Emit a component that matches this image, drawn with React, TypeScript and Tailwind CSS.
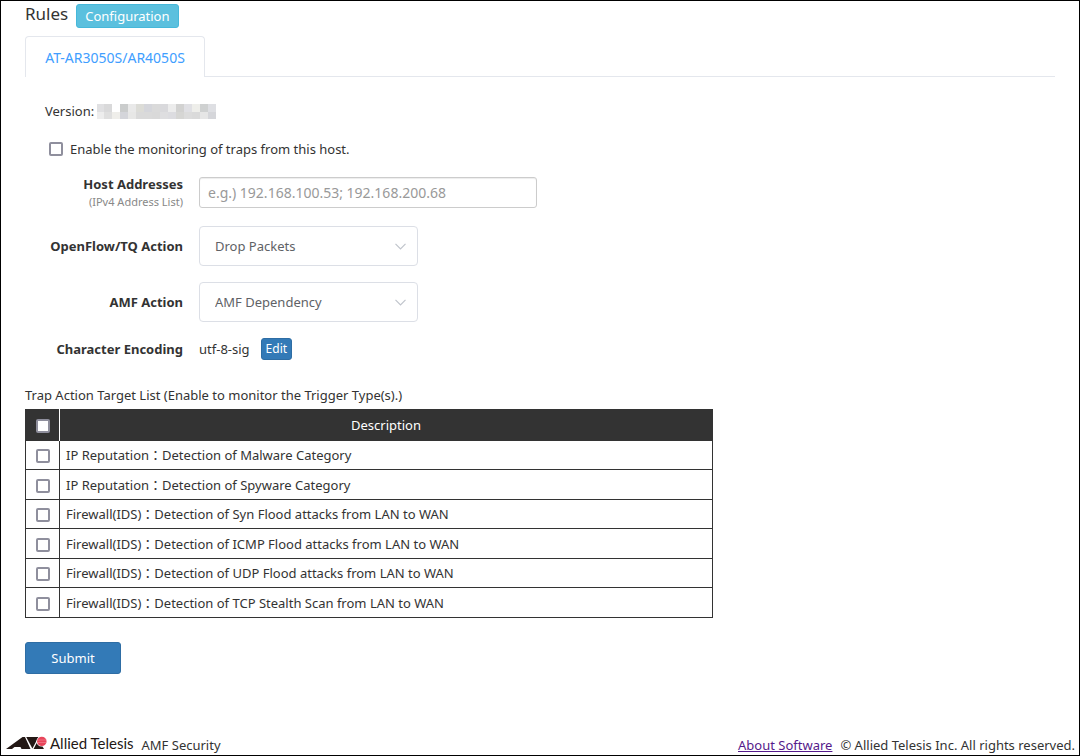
import React from "react";

const triggers = [
  "IP Reputation：Detection of Malware Category",
  "IP Reputation：Detection of Spyware Category",
  "Firewall(IDS)：Detection of Syn Flood attacks from LAN to WAN",
  "Firewall(IDS)：Detection of ICMP Flood attacks from LAN to WAN",
  "Firewall(IDS)：Detection of UDP Flood attacks from LAN to WAN",
  "Firewall(IDS)：Detection of TCP Stealth Scan from LAN to WAN",
];

const maskTop = ["#e0e0e2", "#d9d9da", "#ffffff", "#cacccc", "#e9e9e9", "#dcdcd7", "#d5d6db", "#dadada", "#d9d9dc", "#ececec", "#d2d2d1", "#e0e0e4", "#eeeeea", "#cfd1d1", "#dedfe3"];
const maskBottom = ["#ededed", "#dfdfdf", "#efeeea", "#d4d5da", "#e7e7e6", "#dadada", "#dadada", "#d9d9d9", "#dedee0", "#dcdce0", "#d6d6d4", "#dcdcdc", "#dadada", "#e6e6e6", "#d5d6da"];

const box =
  "block size-[14px] shrink-0 appearance-none rounded-[2px] border-2 border-[#8f8f9d] bg-white checked:bg-[#337ab7]";

function MaskedVersion() {
  return (
    <svg width="119" height="15" viewBox="0 0 119 15" shapeRendering="crispEdges" role="img" aria-label="Hidden version">
      {maskTop.map((c, i) => (
        <rect key={"t" + i} x={i * 8 - (i > 0 ? 1 : 0)} y="0" width="8" height="8" fill={c} />
      ))}
      {maskBottom.map((c, i) => (
        <rect key={"b" + i} x={i * 8 - (i > 0 ? 1 : 0)} y="8" width="8" height="7" fill={c} />
      ))}
    </svg>
  );
}

function SelectField({ id, options }: { id: string; options: string[] }) {
  return (
    <div className="grid w-[219px] items-center">
      <select
        id={id}
        className="col-start-1 row-start-1 h-10 w-full appearance-none rounded-[4px] border border-[#dcdfe6] bg-white pr-8 pl-[15px] text-[13px] text-[#606266]"
      >
        {options.map((o) => (
          <option key={o}>{o}</option>
        ))}
      </select>
      <svg className="pointer-events-none col-start-1 row-start-1 mr-3 justify-self-end" width="11" height="7" viewBox="0 0 11 7" fill="none" stroke="#c0c4cc" strokeWidth="1.2">
        <path d="M0.5 0.8 5.5 5.8 10.5 0.8" />
      </svg>
    </div>
  );
}

function Mark() {
  return (
    <svg width="41" height="14" viewBox="0 0 41 14" aria-hidden="true">
      <path d="M0 13 16.5 1H19L24.5 13H15.5L14.5 11H8.5L6 13Z" fill="#231815" />
      <path d="M20.2 1H32.5L26.4 12.6Z" fill="#231815" />
      <path d="M32.4 3.6 38 13H27.6Z" fill="#231815" />
      <circle cx="35.6" cy="5.4" r="5.2" fill="#fff" />
      <circle cx="35.8" cy="5.4" r="4.7" fill="#e8455a" />
      <path d="M31 4h9.600M31 6.500h9.600" stroke="#f28b98" strokeWidth="0.6" />
    </svg>
  );
}

export default function App() {
  return (
    <div className="flex min-h-screen flex-col border border-black bg-white font-['Noto_Sans','Noto_Sans_CJK_JP',sans-serif] text-[13px] leading-[18px] text-[#333]">
      <main className="flex grow flex-col px-6">
        <header className="flex h-[35px] items-start gap-2">
          <h1 className="text-[17px] leading-[26px]">Rules</h1>
          <button type="button" className="mt-[3px] h-6 rounded-[3px] border border-[#46b8da] bg-[#5bc0de] px-2 text-[13px] leading-[22px] text-white">
            Configuration
          </button>
        </header>
        <nav className="flex" role="tablist">
          <button type="button" role="tab" aria-selected="true" className="h-[41px] w-[180px] rounded-t-[4px] border border-b-0 border-[#e4e7ed] pt-[2px] text-[14px] whitespace-nowrap text-[#409eff]">
            AT-AR3050S/AR4050S
          </button>
          <div className="grow border-b border-[#e4e7ed]" />
        </nav>
        <form className="flex flex-col items-start" onSubmit={(e) => e.preventDefault()}>
          <p className="mt-[25px] ml-5 flex items-center gap-[3px]">
            Version: <MaskedVersion />
          </p>
          <label className="mt-5 ml-6 flex items-center gap-[7px]">
            <input type="checkbox" className={box} />
            Enable the monitoring of traps from this host.
          </label>
          <div className="mt-4 grid grid-cols-[158px_auto] items-center gap-x-4 gap-y-4">
            <label htmlFor="hosts" className="pt-[2px] text-right leading-[17px] font-bold">
              Host Addresses
              <span className="block text-[11px] font-normal text-[#888]">(IPv4 Address List)</span>
            </label>
            <input
              id="hosts"
              type="text"
              placeholder="e.g.) 192.168.100.53; 192.168.200.68"
              className="h-[31px] w-[338px] rounded-[3px] border border-[#ccc] px-2 text-[14px] shadow-[inset_0_1px_1px_rgba(0,0,0,0.075)] placeholder:text-[#999]"
            />
            <label htmlFor="tq" className="text-right font-bold">OpenFlow/TQ Action</label>
            <SelectField id="tq" options={["Drop Packets"]} />
            <label htmlFor="amf" className="text-right font-bold">AMF Action</label>
            <SelectField id="amf" options={["AMF Dependency"]} />
            <span className="text-right font-bold">Character Encoding</span>
            <div className="flex items-center gap-[11px]">
              utf-8-sig
              <button type="button" className="h-[22px] rounded-[3px] border border-[#2e6da4] bg-[#337ab7] px-1 text-[12px] leading-5 text-white">
                Edit
              </button>
            </div>
          </div>
          <table className="mt-[26px] w-[688px] max-w-full border-collapse border border-[#333]">
            <caption className="pb-[5px] text-left">Trap Action Target List (Enable to monitor the Trigger Type(s).)</caption>
            <thead>
              <tr className="h-[31px] bg-[#333] text-white">
                <th className="w-[34px] border-r border-white pt-[2px] pl-[10px] font-normal">
                  <input type="checkbox" aria-label="Select all" className={box} />
                </th>
                <th className="font-normal">Description</th>
              </tr>
            </thead>
            <tbody>
              {triggers.map((t, i) => (
                <tr key={t} className="h-[29px] border-t border-[#333] even:h-[30px]">
                  <td className="border-r border-[#333] pt-[2px] pl-[10px]">
                    <input id={"trigger-" + i} type="checkbox" className={box} />
                  </td>
                  <td className="pl-[6px]">
                    <label htmlFor={"trigger-" + i}>{t}</label>
                  </td>
                </tr>
              ))}
            </tbody>
          </table>
          <button type="submit" className="mt-6 h-8 w-24 rounded-[3px] border border-[#2e6da4] bg-[#337ab7] text-[13px] text-white">
            Submit
          </button>
        </form>
      </main>
      <footer className="flex items-end justify-between pr-1 pb-px pl-[5px]">
        <div className="flex items-end gap-2">
          <span className="flex items-center gap-[3px] pb-[2px]">
            <Mark />
            <span className="font-['Lato',sans-serif] text-[15px] text-[#231815]">Allied Telesis</span>
          </span>
          AMF Security
        </div>
        <div className="flex gap-2">
          <a href="#about" className="text-[#551a8b] underline">About Software</a>
          <span>© Allied Telesis Inc. All rights reserved.</span>
        </div>
      </footer>
    </div>
  );
}
